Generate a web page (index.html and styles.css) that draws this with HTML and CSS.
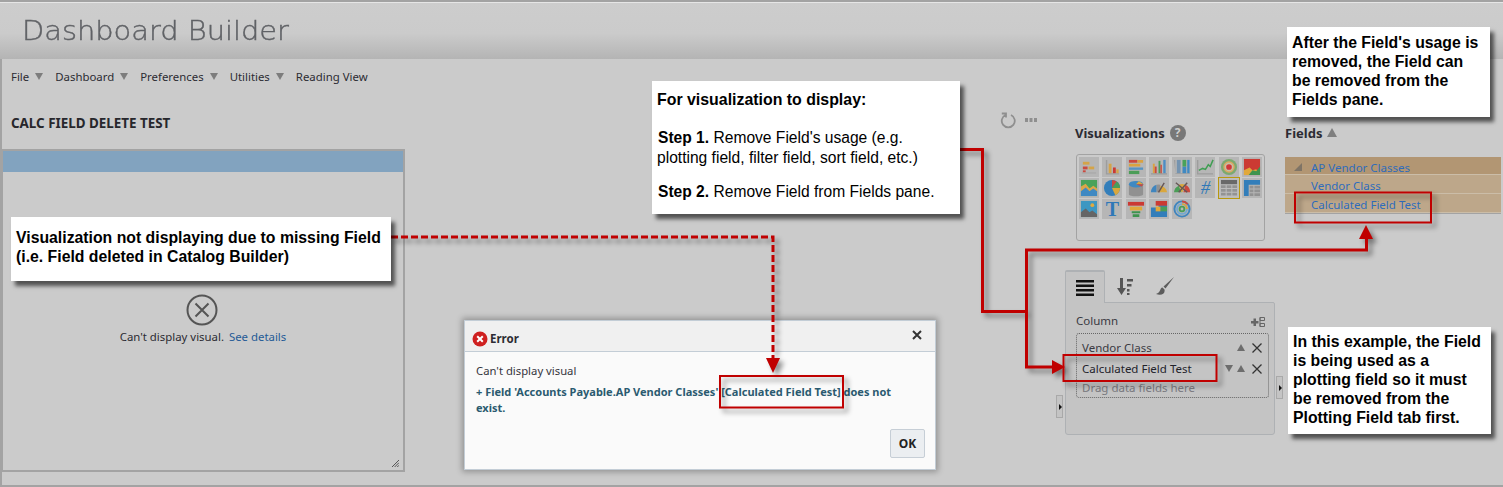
FILE: index.html
```html
<!DOCTYPE html>
<html lang="en">
<head>
<meta charset="utf-8">
<title>Dashboard Builder</title>
<link rel="stylesheet" href="styles.css">
</head>
<body>
<div class="page">
  <header class="app-header"><h1>Dashboard Builder</h1></header>
  <div class="workspace">
    <div class="left-col">
      <nav class="menu">
        <span class="menu-item">File<i class="tri"></i></span>
        <span class="menu-item">Dashboard<i class="tri"></i></span>
        <span class="menu-item">Preferences<i class="tri"></i></span>
        <span class="menu-item">Utilities<i class="tri"></i></span>
        <span class="menu-item">Reading View</span>
      </nav>
      <h2 class="dash-title">CALC FIELD DELETE TEST</h2>
      <section class="viz-panel">
        <div class="viz-bar"></div>
        <div class="viz-body">
          <svg class="err-circle" viewBox="0 0 32 32"><circle cx="16" cy="16" r="14.5"/><path d="M9.5 9.5l13 13M22.5 9.5l-13 13"/></svg>
          <p class="err-text">Can't display visual. <a class="err-link">See details</a></p>
          <svg class="grip" viewBox="0 0 8 8"><path d="M0 8L8 0M3 8L8 3M6 8L8 6"/></svg>
        </div>
      </section>
    </div>

    <div class="tools-col">
      <svg class="refresh" viewBox="0 0 16 18"><path d="M5.500 4a6.500 6.500 0 1 0 5.500 0M1.800 2.500h4.200v4"/></svg>
      <svg class="dots" viewBox="0 0 12 4"><path d="M0 0h3v4H0zM4.500 0h3v4h-3zM9 0h3v4H9z"/></svg>
    </div>

    <div class="pane-col">
      <h3 class="pane-head viz-head">Visualizations <span class="help">?</span></h3>
      <div class="viz-grid">
        <span class="tile"><svg viewBox="0 0 19 19"><path fill="#a9a9a9" d="M2 15h15v1.500H2z"/><path fill="#d9a23a" d="M3 4h7v3H3z"/><path fill="#cf3a2e" d="M3 9h5v3H3z"/><path fill="#d9a23a" d="M9 9h6v3H9z"/><path fill="#cf3a2e" d="M3 13h3v2H3z"/></svg></span>
        <span class="tile"><svg viewBox="0 0 19 19"><path fill="#9a9a9a" d="M3 2h1.500v14H17v1.500H3z"/><path fill="#d9a23a" d="M6 6h3v10H6z"/><path fill="#cf2a22" d="M10.500 10h3v6h-3z"/><path fill="#d9a23a" d="M14 12h2.500v4H14z"/></svg></span>
        <span class="tile"><svg viewBox="0 0 19 19"><path fill="#cf3a2e" d="M2 2h9v3H2z"/><path fill="#e0a030" d="M11 2h6v3h-6zM2 6h12v3H2z"/><path fill="#4a8fc4" d="M2 10h15v2.500H2z"/><path fill="#3d9a4a" d="M2 13.500h11V17H2z"/></svg></span>
        <span class="tile"><svg viewBox="0 0 19 19"><path fill="#9a9a9a" d="M1 16h17v1.500H1z"/><path fill="#e0a030" d="M3 6h2v10H3z"/><path fill="#cf3a2e" d="M5 9h2v7H5z"/><path fill="#3d9a4a" d="M9 3h2v13H9z"/><path fill="#cf3a2e" d="M11 7h1.500v9H11z"/><path fill="#3d88c8" d="M14 2h2.500v14H14z"/></svg></span>
        <span class="tile"><svg viewBox="0 0 19 19"><path fill="#9a9a9a" d="M1 2h1.500v15H18v-1H2.500z"/><path fill="#6b8fb0" d="M4 2h4v14H4z"/><path fill="#2f83c4" d="M10 9h4v7h-4z"/><path fill="#3aa04e" d="M10 2h4v7h-4z"/><path fill="#2f83c4" d="M15 2h2.500v14H15z"/></svg></span>
        <span class="tile"><svg viewBox="0 0 19 19"><path fill="#9a9a9a" d="M1 2h1.500v14H18v1.500H1z"/><path fill="none" stroke="#2f9b45" stroke-width="1.600" d="M3 13l4-2 3 1 3-5 2 2 3-7"/></svg></span>
        <span class="tile"><svg viewBox="0 0 19 19"><circle cx="9.500" cy="9.500" r="8.500" fill="#74a866"/><circle cx="9.500" cy="9.500" r="6" fill="#e0a858"/><circle cx="9.500" cy="9.500" r="4.500" fill="#c9c0a8"/><circle cx="9.500" cy="9.500" r="3" fill="#d5262a"/></svg></span>
        <span class="tile"><svg viewBox="0 0 19 19"><path fill="#cf2a22" d="M1 1h17v17H1z"/><path fill="#e7a72a" d="M1 18V13l6-3 3 3 4-1 4 6z"/><path fill="#2f9040" d="M6 18l4-5 4 1 4-5v9z"/></svg></span>
        <span class="tile"><svg viewBox="0 0 19 19"><path fill="#3aa04e" d="M1 1h17v17H1z"/><path fill="#e1a43a" d="M1 8l5-3 4 5 4-3 4 3v8H1z"/><path fill="#2f83c4" d="M1 13l5-4 4 4 4-3 4 3v5H1z"/></svg></span>
        <span class="tile"><svg viewBox="0 0 19 19"><circle cx="9.500" cy="9.500" r="8.500" fill="#2277bb"/><path fill="#e0a62c" d="M9.500 9.500H18a8.500 8.500 0 0 1-5 7.700z"/><path fill="#cf3a2e" d="M9.500 9.500V1a8.500 8.500 0 0 1 5 1.700z"/><path fill="#3d9a4a" d="M9.500 9.500l5-6.800A8.500 8.500 0 0 1 18 9.500z"/></svg></span>
        <span class="tile"><svg viewBox="0 0 19 19"><path fill="#8c8c8c" d="M2 6v10c0 3 15 3 15 0V6z"/><ellipse cx="9.500" cy="5.500" rx="7.500" ry="3.500" fill="#2f83c4"/><path fill="#e0a62c" d="M9.500 5.500l3-3.200 5 3.200z"/><path fill="#cf3a2e" d="M9.500 5.500l6 2.500 2-2.500z"/></svg></span>
        <span class="tile"><svg viewBox="0 0 19 19"><path fill="#2f7fc0" d="M1 14a8.500 8.500 0 0 1 6-8v8z"/><path fill="#8c8c8c" d="M7 6a8.500 8.500 0 0 1 4 0l-1 8H7z"/><path fill="#e0a62c" d="M11 7a8.500 8.500 0 0 1 7 7h-8z"/><path stroke="#5b4a4a" stroke-width="1.500" d="M9 14l6-10"/></svg></span>
        <span class="tile"><svg viewBox="0 0 19 19"><path fill="#3d9a4a" d="M1 14a8.500 8.500 0 0 1 5-7l3 7z"/><path fill="#e0a62c" d="M6 6a8.500 8.500 0 0 1 7 0l-3 8H9z"/><path fill="#cf3a2e" d="M13 6a8.500 8.500 0 0 1 5 8h-7z"/><path stroke="#5b4a4a" stroke-width="1.500" d="M3 4l12 10M15 4L6 14"/></svg></span>
        <span class="tile tile-text tile-hash">#</span>
        <span class="tile tile-on"><svg viewBox="0 0 19 19"><path fill="#5e5e5e" d="M1 1h17v4.500H1z"/><path fill="#8e8e8e" d="M1 6.500h5v3H1zM7 6.500h5v3H7zM13 6.500h5v3h-5zM1 10.500h5v3H1zM7 10.500h5v3H7zM13 10.500h5v3h-5zM1 14.500h5v3H1zM7 14.500h5v3H7zM13 14.500h5v3h-5z"/></svg></span>
        <span class="tile"><svg viewBox="0 0 19 19"><path fill="#2277bb" d="M1 1h17v5H6v12H1z"/><path fill="#8e8e8e" d="M7 7h4v3H7zM12 7h6v3h-6zM7 11h4v3H7zM12 11h6v3h-6zM7 15h4v3H7zM12 15h6v3h-6z"/></svg></span>
        <span class="tile"><svg viewBox="0 0 19 19"><path fill="#2d93c4" d="M1 1h17v17H1z"/><circle cx="13" cy="5.500" r="2" fill="#e8a92e"/><path fill="#5a5a5a" d="M1 18v-5l5-4 4 4 3-2 5 4v3z"/></svg></span>
        <span class="tile tile-text tile-t">T</span>
        <span class="tile"><svg viewBox="0 0 19 19"><path fill="#cf2a22" d="M1 2h17v4H1z"/><path fill="#e7a72a" d="M3 7h13v4H3z"/><path fill="#2f9040" d="M5 12h9v2H5zM6 15h7v3H6z"/></svg></span>
        <span class="tile"><svg viewBox="0 0 19 19"><path fill="#2277bb" d="M1 8h8V1h9v17H1z"/><path fill="#cf2a22" d="M6 1h12v5H6z"/><path fill="#3d9a4a" d="M11 7h7v5h-7z"/><path fill="#e7a72a" d="M6 7h5v5H6z"/></svg></span>
        <span class="tile"><svg viewBox="0 0 19 19" fill="none" stroke-width="2"><circle cx="9.500" cy="9.500" r="8" stroke="#2f7fc0"/><circle cx="9.500" cy="9.500" r="5.200" stroke="#6aa7d4"/><path stroke="#e0a62c" d="M9.500 4.300a5.200 5.200 0 0 1 5.200 5.200"/><path stroke="#cf3a2e" d="M9.500 1.500a8 8 0 0 1 6 3"/><circle cx="9.500" cy="9.500" r="2.500" stroke="#3d9a4a"/></svg></span>
      </div>

      <div class="plot">
        <div class="plot-tabs">
          <span class="plot-tab plot-tab-on"><svg class="ic-lines" viewBox="0 0 18 16"><path d="M0 0h18v2.500H0zM0 4.500h18V7H0zM0 9h18v2.500H0zM0 13.500h18V16H0z"/></svg></span>
          <span class="plot-tab"><svg class="ic-sort" viewBox="0 0 16 17"><path d="M3 0h3v10h3l-4.500 7L0 10h3zM10 1h6v2.500h-6zM10 6h4.500v2.500H10zM10 11h2.500v2.500H10zM10 15h2.500v2H10z"/></svg></span>
          <span class="plot-tab"><svg class="ic-brush" viewBox="0 0 18 18"><path d="M18 0L7.500 9.500l2 2zM6.500 10.500c-3 .5-1.500 5-6.500 6.500 5 2 9.500 0 8.500-4.500z"/></svg></span>
        </div>
        <div class="plot-body">
          <i class="handle handle-left"></i>
          <i class="handle handle-right"></i>
          <div class="col-head"><span>Column</span><svg class="ic-group" viewBox="0 0 14 12"><path d="M0 5h2.500V2.500H5V5h2.500v2.500H5V10H2.500V7.500H0z"/><path class="ic-group-line" d="M9 1.500h4.500v3H9zM9 7.500h4.500v3H9zM9 1.500v9"/></svg></div>
          <div class="dropzone">
            <div class="field-row"><span class="field-name">Vendor Class</span><i class="tri-up"></i><svg class="ic-x" viewBox="0 0 10 10"><path d="M.5.5l9 9M9.500.5l-9 9"/></svg></div>
            <div class="field-row"><span class="field-name field-dark">Calculated Field Test</span><i class="tri-down"></i><i class="tri-up"></i><svg class="ic-x" viewBox="0 0 10 10"><path d="M.5.5l9 9M9.500.5l-9 9"/></svg></div>
            <div class="field-hint">Drag data fields here</div>
          </div>
        </div>
      </div>
    </div>

    <div class="fields-col">
      <h3 class="pane-head">Fields <i class="tri-head"></i></h3>
      <ul class="tree">
        <li class="tree-folder"><i class="tree-tri"></i>AP Vendor Classes</li>
        <li class="tree-leaf">Vendor Class</li>
        <li class="tree-leaf">Calculated Field Test</li>
      </ul>
    </div>
  </div>

  <div class="dialog">
    <div class="dialog-head">
      <svg class="err-badge" viewBox="0 0 16 16"><circle cx="8" cy="8" r="7.500"/><path d="M5.200 5.200l5.600 5.600M10.800 5.200l-5.600 5.600"/></svg>
      <strong>Error</strong>
      <svg class="dialog-close" viewBox="0 0 10 10"><path d="M1 1l8 8M9 1l-8 8"/></svg>
    </div>
    <div class="dialog-body">
      <p class="dialog-line">Can't display visual</p>
      <p class="dialog-msg">+ Field 'Accounts Payable.AP Vendor Classes' [Calculated Field Test] does not exist.</p>
      <div class="dialog-actions"><button class="ok">OK</button></div>
    </div>
  </div>

  <svg class="marks marks-shadow" viewBox="0 0 1503 487">
    <path class="dash" d="M391 237H773V360"/>
    <path class="solid" d="M960 149.500H982.500V311.500H1026.500"/>
    <path class="solid" d="M1366.500 237V250H1026.500V367H1054"/>
    <path class="head" d="M766 358h14l-7 15z"/>
    <path class="head" d="M1052 360l13 7-13 7z"/>
    <path class="head" d="M1359 239l7-14 7 14z"/>
    <rect class="box" x="1063.500" y="355" width="153" height="26"/>
    <rect class="box" x="1295" y="192.500" width="136" height="30"/>
    <rect class="box" x="720" y="376" width="123" height="31.500"/>
  </svg>

  <aside class="note note-a">Visualization not displaying due to missing Field (i.e. Field deleted in Catalog Builder)</aside>
  <aside class="note note-b">
    <p class="note-lead">For visualization to display:</p>
    <p class="note-step"><b>Step 1.</b> Remove Field's usage (e.g. <span class="note-cont">plotting field, filter field, sort field, etc.)</span></p>
    <p class="note-step"><b>Step 2.</b> Remove Field from Fields pane.</p>
  </aside>
  <aside class="note note-c">After the Field's usage is removed, the Field can be removed from the Fields pane.</aside>
  <aside class="note note-d">In this example, the Field is being used as a plotting field so it must be removed from the Plotting Field tab first.</aside>
</div>
</body>
</html>
```
FILE: styles.css
```css
* { box-sizing: border-box; }
html, body { margin: 0; padding: 0; }
body { background: #cbcbcb; font-family: "Noto Sans", sans-serif; font-size: 11.5px; color: #2c2c33; }
p, h1, h2, h3, ul { margin: 0; padding: 0; }
i { display: block; }

.page { position: relative; width: 1503px; height: 487px; overflow: hidden; display: flex; flex-direction: column; }

.app-header { height: 59px; border-top: 2px solid #a3a3a3; box-shadow: inset 0 1px 0 #e6e6e6; background: linear-gradient(#cdcdcd 0, #cbcbcb 55%, #b4b4b4 100%); padding: 14px 0 0 22px; }
.app-header h1 { font-family: "DejaVu Sans", sans-serif; font-weight: 200; font-size: 26px; line-height: 30px; color: #606266; -webkit-text-stroke: .4px #606266; white-space: nowrap; transform: scaleX(1.11); transform-origin: left; }

.workspace { flex: 1; display: flex; border-left: 2px solid #a3a3a3; border-bottom: 2px solid #a3a3a3; }

.left-col { width: 403px; flex: none; }
.menu { height: 35px; display: flex; align-items: center; padding-left: 9px; gap: 12px; font-size: 11.400px; }
.menu-item { display: flex; align-items: center; gap: 6px; }
.tri { width: 0; height: 0; border: 4.500px solid transparent; border-top: 7px solid #7d7d7d; border-bottom: 0; }
.dash-title { height: 55px; padding: 20px 0 0 9px; font-size: 13.400px; line-height: 18px; font-weight: 700; color: #27272c; white-space: nowrap; }

.viz-panel { height: 323px; border: 2px solid #a3a3a3; border-left-width: 1px; }
.viz-bar { height: 21px; background: #82a3bf; }
.viz-body { position: relative; height: 298px; display: flex; flex-direction: column; align-items: center; padding-top: 122px; }
.err-circle { width: 32px; height: 32px; fill: none; stroke: #555; stroke-width: 2; margin-left: -3px; }
.err-text { margin-top: 2px; line-height: 18px; white-space: pre; font-size: 11.400px; }
.err-link { color: #1f5a96; margin-left: 2px; }
.grip { position: absolute; right: 4px; bottom: 3px; width: 7px; height: 7px; stroke: #444; fill: none; stroke-width: 1; }

.tools-col { width: 651px; flex: none; display: flex; justify-content: flex-end; gap: 9px; padding: 42px 19px 0 0; height: 80px; align-items: center; }
.refresh { width: 16px; height: 18px; fill: none; stroke: #8f8f8f; stroke-width: 1.800; }
.dots { width: 12px; height: 4px; fill: #8f8f8f; }

.pane-col { width: 227px; flex: none; padding-top: 66px; }
.pane-head { font-size: 13px; line-height: 16px; font-weight: 700; color: #2c2c33; display: flex; align-items: center; gap: 5px; }
.viz-head { margin-left: 19px; }
.help { width: 16px; height: 16px; border-radius: 50%; background: #787878; color: #cfcfcf; font-size: 12px; line-height: 16px; text-align: center; }

.viz-grid { margin: 13px 0 0 20px; width: 189px; height: 87px; border: 1px solid #a3a3a3; border-radius: 3px; padding: 2px 0 0 2px; display: grid; grid-template-columns: repeat(8, 23.300px); grid-auto-rows: 21px; }
.tile { width: 20px; height: 20px; background: #b6b6b6; padding: 1px 0 0 1px; display: block; }
.tile svg { width: 18px; height: 18px; display: block; opacity: .88; }
.tile-on { outline: 1px solid #b8980f; box-shadow: 0 0 0 1px #b8980f; background: #bdbdbd; }
.tile-text { padding: 0; text-align: center; color: #2f78b8; font-family: "Liberation Serif", serif; font-size: 20px; line-height: 20px; }
.tile-hash { font-style: italic; font-size: 19px; }
.tile-t { font-weight: 700; }

.plot { margin: 29px 0 0 9px; width: 210px; }
.plot-tabs { display: flex; height: 32px; }
.plot-tab { width: 40px; display: flex; align-items: center; justify-content: center; }
.plot-tab-on { background: #c4c4c4; border: 1px solid #aeb1b4; border-bottom: 0; border-top-width: 2px; border-radius: 2px 2px 0 0; margin-bottom: -1px; position: relative; z-index: 1; }
.ic-lines { width: 18px; height: 16px; fill: #111; }
.ic-sort { width: 16px; height: 17px; fill: #555; }
.ic-brush { width: 18px; height: 18px; fill: #5c5c5c; }

.plot-body { position: relative; height: 133px; background: #c4c4c4; border: 1px solid #aeb1b4; border-radius: 0 2px 3px 3px; padding: 7px 5px 0 10px; }
.handle { position: absolute; width: 7px; height: 23px; background: #c4c4c4; border: 1px solid #a9a9a9; }
.handle::after { content: ""; position: absolute; left: 2px; top: 8px; border: 3px solid transparent; border-left: 3px solid #111; border-right: 0; }
.handle-left { left: -10px; top: 92px; }
.handle-right { right: -9px; top: 73px; }
.col-head { height: 21px; display: flex; justify-content: space-between; align-items: center; color: #3a3a42; padding-right: 4px; }
.ic-group { width: 14px; height: 12px; fill: #666; margin-top: 3px; }
.ic-group-line { fill: none; stroke: #666; stroke-width: 1; }
.dropzone { height: 65px; margin-top: 2px; border: 1px dotted #666; border-radius: 3px; padding: 3px 0 0 5px; }
.field-row { height: 21px; display: flex; align-items: center; gap: 4px; color: #3a3a42; padding-right: 6px; }
.field-name { margin-right: auto; }
.field-dark { color: #22222a; }
.tri-up { width: 0; height: 0; border: 4px solid transparent; border-bottom: 7px solid #6d6d6d; border-top: 0; }
.tri-down { width: 0; height: 0; border: 4px solid transparent; border-top: 7px solid #6d6d6d; border-bottom: 0; }
.ic-x { width: 10px; height: 10px; stroke: #333; stroke-width: 1.300; fill: none; margin-left: 3px; }
.field-hint { color: #7a7a80; line-height: 16px; margin-top: 1px; }

.fields-col { width: 216px; flex: none; margin-left: 2px; padding-top: 66px; }
.tri-head { width: 0; height: 0; border: 5px solid transparent; border-bottom: 9px solid #7f7f7f; border-top: 0; margin-top: -2px; }
.tree { list-style: none; margin-top: 16px; border-bottom: 1px solid #a3a3a3; color: #2f6cbc; width: 216px; }
.tree li { height: 19px; line-height: 22px; padding-left: 26px; border-bottom: 1px solid #cbbda8; }
.tree-folder { height: 18px !important; line-height: 21px !important; background: #b29673; position: relative; }
.tree-leaf { background: #bda78a; }
.tree-tri { position: absolute; left: 9px; top: 6px; width: 0; height: 0; border-style: solid; border-width: 0 0 8px 8px; border-color: transparent transparent #7f7466 transparent; }

.dialog { position: absolute; left: 464px; top: 320px; width: 472px; height: 150px; background: #fafafa; border: 1px solid #c3cdd6; box-shadow: 0 0 6px 2px rgba(0,0,0,.28); display: flex; flex-direction: column; }
.dialog-head { height: 31px; background: #f0f0f0; border-bottom: 1px solid #c3cdd6; display: flex; align-items: center; padding: 5px 0 0 7px; gap: 2px; color: #2c2c33; font-size: 11.500px; }
.err-badge { width: 16px; height: 16px; fill: #cf2020; stroke: none; }
.err-badge path { stroke: #fff; stroke-width: 2; fill: none; }
.dialog-close { width: 10px; height: 10px; margin-left: auto; margin-right: 13px; margin-top: -7px; stroke: #333; stroke-width: 2; fill: none; }
.dialog-body { padding: 10px 10px 0 11px; flex: 1; }
.dialog-line { line-height: 18px; color: #36363e; font-size: 11.300px; }
.dialog-msg { margin-top: 4px; width: 430px; line-height: 16px; font-weight: 700; font-size: 11px; color: #2b5a70; }
.dialog-actions { display: flex; justify-content: flex-end; padding: 13px 0 0; }
.ok { width: 35px; height: 29px; padding: 0; background: #ebeef1; border: 1px solid #c6ced6; border-radius: 2px; font: 700 12px "Noto Sans", sans-serif; color: #222; }

.marks { position: absolute; left: 0; top: 0; width: 1503px; height: 487px; pointer-events: none; }
.marks-shadow { filter: drop-shadow(4px 4px 2.500px rgba(0,0,0,.42)); }
.dash { fill: none; stroke: #c00000; stroke-width: 3; stroke-dasharray: 7 3; }
.solid { fill: none; stroke: #c00000; stroke-width: 3; }
.head { fill: #c00000; }
.box { fill: none; stroke: #c00000; stroke-width: 2; }

.note { position: absolute; background: #fff; color: #000; font-family: "Liberation Sans", sans-serif; font-size: 15.800px; line-height: 19px; font-weight: 700; box-shadow: 4px 5px 4px rgba(0,0,0,.6); }
.note-a { left: 11px; top: 217px; width: 380px; height: 64px; padding: 11px 4px 0 5px; }
.note-b { left: 652px; top: 81px; width: 308px; height: 133px; padding: 9px 5px 0 5px; font-weight: 400; font-size: 15.600px; }
.note-b b { font-weight: 700; }
.note-lead { font-weight: 700; margin-bottom: 19px; font-size: 15.900px; }
.note-step { margin: 0 0 15px 1px; line-height: 19.500px; }
.note-cont { display: block; margin-left: -1px; }
.note-c { left: 1287px; top: 27px; width: 203px; height: 90px; padding: 6px 5px 0 5px; }
.note-d { left: 1288px; top: 327px; width: 203px; height: 107px; padding: 5px 5px 0 5px; }
```
